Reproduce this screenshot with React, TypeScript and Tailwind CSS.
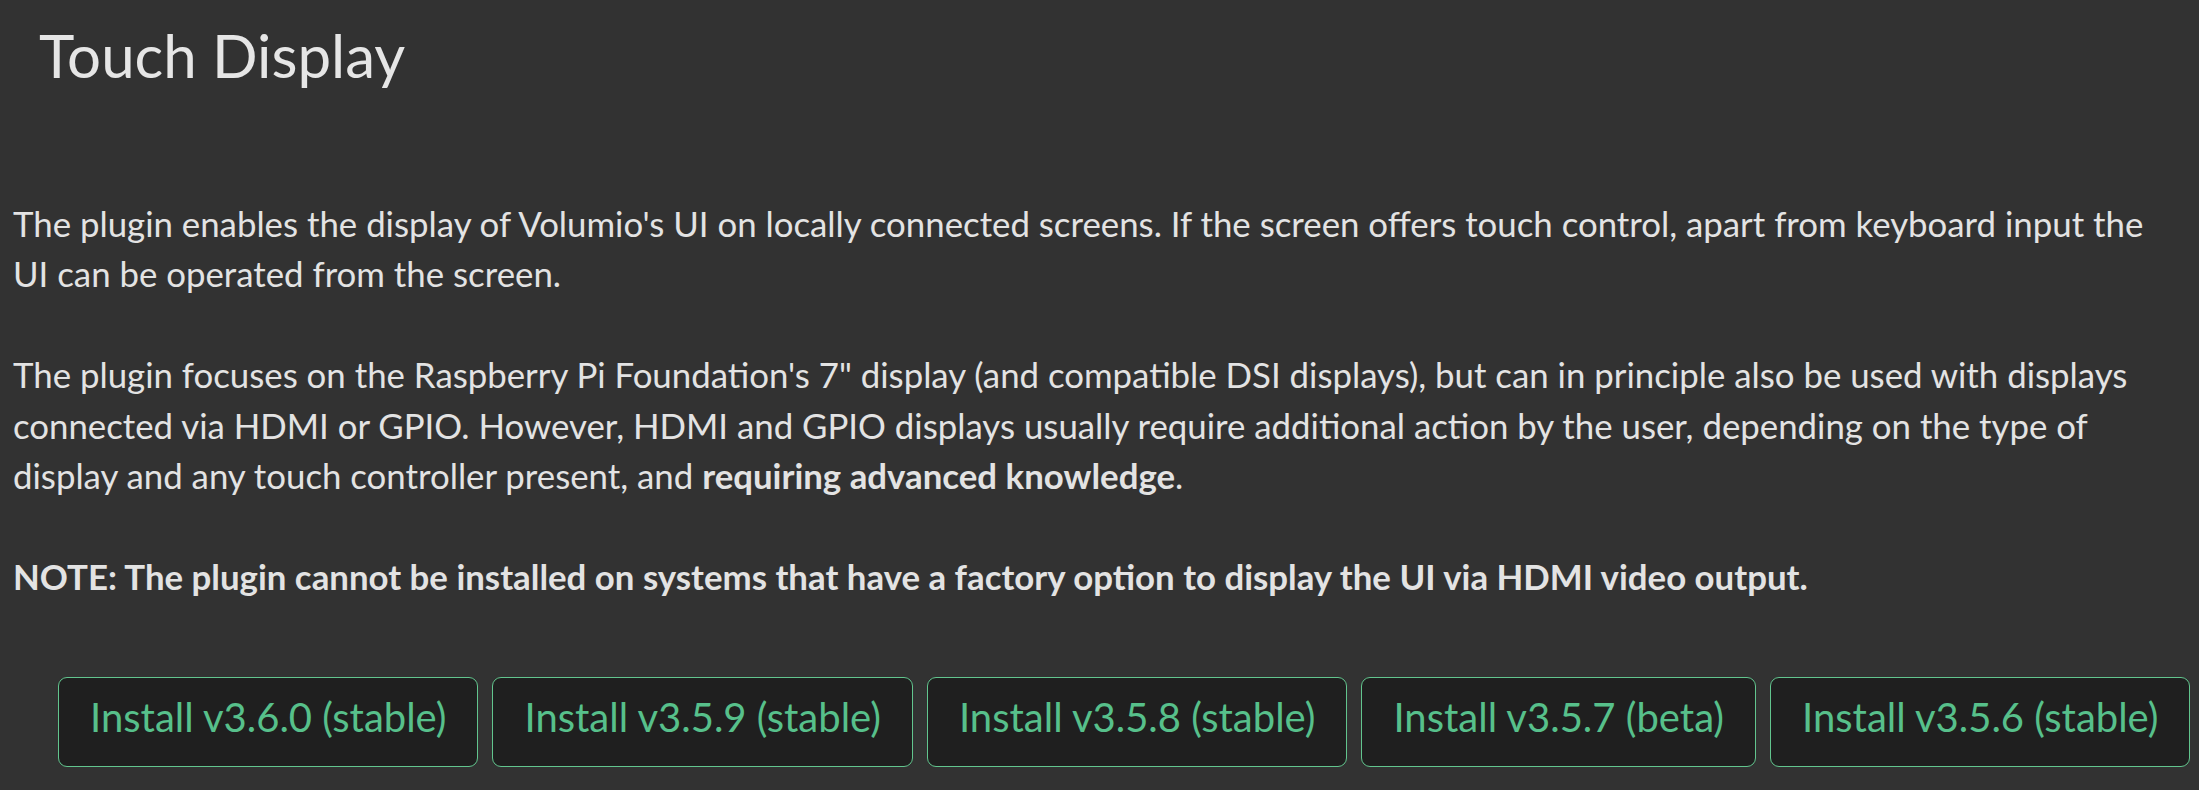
const versions = [
  "Install v3.6.0 (stable)",
  "Install v3.5.9 (stable)",
  "Install v3.5.8 (stable)",
  "Install v3.5.7 (beta)",
  "Install v3.5.6 (stable)",
];

export default function App() {
  return (
    <div className="min-h-[790px] w-full bg-[#323232] font-['Lato','Open_Sans',sans-serif] text-[#e3e3e3]">
      <h1 className="pl-[39px] pt-[19px] text-[60px] leading-[1.2] font-normal text-[#e6e6e6]">
        Touch Display
      </h1>

      <div className="mt-[108px] pl-[13px] pr-[28px] text-[34.8px] leading-[50.4px]">
        <p>
          The plugin enables the display of Volumio's UI on locally connected screens. If the screen offers touch
          control, apart from keyboard input the UI can be operated from the screen.
        </p>
        <br />
        <p>
          The plugin focuses on the Raspberry Pi Foundation's 7" display (and compatible DSI displays), but can in
          principle also be used with displays connected via HDMI or GPIO. However, HDMI and GPIO displays usually
          require additional action by the user, depending on the type of display and any touch controller present,
          and <b className="font-bold">requiring advanced knowledge</b>.
        </p>
        <br />
        <p className="font-bold">
          NOTE: The plugin cannot be installed on systems that have a factory option to display the UI via HDMI video
          output.
        </p>
      </div>

      <div className="mt-[75px] flex gap-[14px] pl-[58px]">
        {versions.map((v) => (
          <button
            key={v}
            className="rounded-[9px] border border-[#62c58e] bg-[#1f1f1f] px-[31px] pt-[15px] pb-[25px] text-[40px] leading-[1.2] text-[#57c08b]"
          >
            {v}
          </button>
        ))}
      </div>
    </div>
  );
}
